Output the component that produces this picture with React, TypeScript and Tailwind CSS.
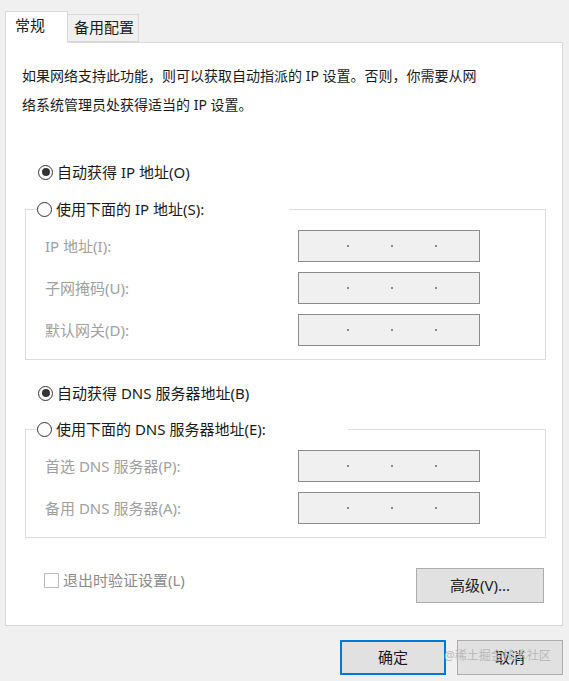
import React from "react";

const font = {
  fontFamily: '"Noto Sans", "Noto Sans CJK SC", sans-serif',
};

function Radio({ checked }: { checked?: boolean }) {
  return (
    <span className="w-[15px] h-[15px] rounded-full border border-[#333] bg-white flex items-center justify-center shrink-0">
      {checked && <span className="w-[8px] h-[8px] rounded-full bg-[#333]" />}
    </span>
  );
}

function IpBox() {
  return (
    <div className="w-[182px] h-[32px] border border-[#8c8c8c] bg-[#f0f0f0] flex items-center pl-[48px]">
      <span className="w-[2px] h-[2px] bg-[#888]" />
      <span className="w-[2px] h-[2px] bg-[#888] ml-[42px]" />
      <span className="w-[2px] h-[2px] bg-[#888] ml-[42px]" />
    </div>
  );
}

function Row({ label, first }: { label: string; first?: boolean }) {
  return (
    <div className={`flex items-center pl-[19px] ${first ? "" : "mt-[10px]"}`}>
      <span className="w-[253px] text-[15px] text-[#a0a0a0]">{label}</span>
      <IpBox />
    </div>
  );
}

function Group({ legend, rows, legendW }: { legend: string; rows: string[]; legendW: string }) {
  return (
    <fieldset className="ml-[19px] mr-[16px] border border-[#dcdcdc] pb-[13px]">
      <legend className={`ml-[11px] h-[22px] flex items-center gap-[4px] bg-white ${legendW}`}>
        <Radio />
        <span className="text-[15px] text-[#1a1a1a]">{legend}</span>
      </legend>
      <div className="pt-[10px]">
        {rows.map((r, i) => (
          <Row key={r} label={r} first={i === 0} />
        ))}
      </div>
    </fieldset>
  );
}

export default function App() {
  return (
    <div className="w-[569px] h-[681px] bg-[#f0f0f0] relative overflow-hidden" style={font}>
      <div className="flex items-end pl-[5px] pt-[11px]">
        <div className="w-[63px] h-[32px] bg-white border border-b-0 border-[#d9d9d9] -mb-px relative z-10 pl-[9px] pt-[2px] text-[15px] text-[#1a1a1a]">
          常规
        </div>
        <div className="w-[71px] h-[28px] bg-[#f0f0f0] border border-l-0 border-[#d9d9d9] pl-[6px] pt-[1px] text-[15px] text-[#1a1a1a]">
          备用配置
        </div>
      </div>

      <div className="ml-[5px] w-[558px] h-[584px] bg-white border border-[#d9d9d9] flex flex-col">
        <p className="pl-[16px] pt-[18px] text-[14px] leading-[29px] text-[#1a1a1a]">
          如果网络支持此功能，则可以获取自动指派的 IP 设置。否则，你需要从网
          <br />
          络系统管理员处获得适当的 IP 设置。
        </p>

        <div className="mt-[42px] ml-[32px] h-[22px] flex items-center gap-[4px]">
          <Radio checked />
          <span className="text-[15px] text-[#1a1a1a]">自动获得 IP 地址(O)</span>
        </div>

        <div className="mt-[15px]">
          <Group
            legend="使用下面的 IP 地址(S):"
            legendW="w-[252px]"
            rows={["IP 地址(I):", "子网掩码(U):", "默认网关(D):"]}
          />
        </div>

        <div className="mt-[22px] ml-[32px] h-[22px] flex items-center gap-[4px]">
          <Radio checked />
          <span className="text-[15px] text-[#1a1a1a]">自动获得 DNS 服务器地址(B)</span>
        </div>

        <div className="mt-[14px]">
          <Group
            legend="使用下面的 DNS 服务器地址(E):"
            legendW="w-[311px]"
            rows={["首选 DNS 服务器(P):", "备用 DNS 服务器(A):"]}
          />
        </div>

        <div className="mt-[30px] flex justify-between items-start pl-[38px] pr-[18px]">
          <div className="flex items-center gap-[4px] mt-[1px]">
            <span className="w-[15px] h-[15px] border border-[#bcbcbc] bg-white" />
            <span className="text-[15px] text-[#8a8a8a]">退出时验证设置(L)</span>
          </div>
          <button className="w-[128px] h-[35px] bg-[#e1e1e1] border border-[#adadad] text-[15px] text-[#1a1a1a]">
            高级(V)...
          </button>
        </div>
      </div>

      <div className="flex justify-end gap-[11px] pr-[6px] mt-[14px]">
        <button className="w-[106px] h-[35px] bg-[#e1e1e1] border-2 border-[#0078d7] text-[15px] text-[#1a1a1a]">
          确定
        </button>
        <button className="w-[106px] h-[35px] bg-[#e1e1e1] border border-[#adadad] text-[15px] text-[#1a1a1a]">
          取消
        </button>
      </div>

      <span className="absolute left-[444px] top-[647px] text-[12px] leading-[18px] text-[#b8b8b8] pointer-events-none">
        @稀土掘金技术社区
      </span>
    </div>
  );
}
